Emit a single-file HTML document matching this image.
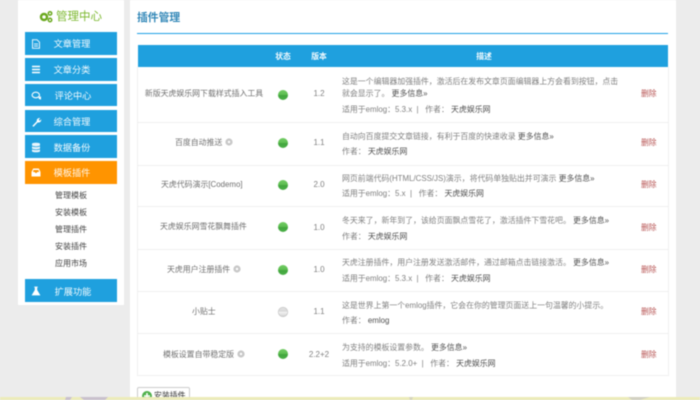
<!DOCTYPE html>
<html lang="zh"><head><meta charset="utf-8"><title>插件管理</title>
<style>
html,body{margin:0;padding:0;width:700px;height:400px;overflow:hidden;background:#ececec}
#w{position:relative;width:700px;height:400px;overflow:hidden;font-family:"Liberation Sans","Noto Sans CJK SC",sans-serif;filter:blur(.4px)}
#w div,#w svg{position:absolute}
.t{white-space:nowrap;line-height:12px;height:12px;font-size:7.6px;color:#777}
.c{text-align:center}
.b{left:25px;width:92px;height:23px;background:#1fa0de}
.bt{left:53px;width:38px;color:#f2fafe;font-size:9.2px;text-align:center;white-space:nowrap;line-height:12px}
.s{left:55px;color:#444;font-size:8px;line-height:12px;white-space:nowrap}
.line{left:138px;width:530px;height:1px;background:#efefef}
.dot{left:278px;width:10px;height:10px;border-radius:50%;background:linear-gradient(#72cc64 0,#5fbf52 45%,#42a63e 55%,#4cb048 100%)}
.n{left:137px;width:134px;text-align:center;font-size:7.9px;color:#707070;line-height:12px;white-space:nowrap}
.v{left:300px;width:38px;text-align:center;font-size:8px;color:#808080;line-height:12px}
.d{left:342px;margin-top:1px;font-size:7.9px;color:#808080;line-height:12px;white-space:nowrap}
.d span{color:#505050}
.x{left:641px;font-size:7.8px;color:#b5504f;line-height:12px;white-space:nowrap}
.g{width:8px;height:8px}
</style></head><body><div id="w">
<div style="left:18px;top:0;width:106px;height:305px;background:#fff"></div>
<div style="left:130px;top:0;width:546px;height:397px;background:#fff"></div>

<svg style="left:39px;top:10px" width="14" height="13" viewBox="0 0 14 13"><circle cx="5" cy="7" r="3" fill="none" stroke="#6aa81e" stroke-width="2.4"/><circle cx="11" cy="3.4" r="1.7" fill="none" stroke="#6aa81e" stroke-width="1.5"/><circle cx="11" cy="10" r="1.7" fill="none" stroke="#6aa81e" stroke-width="1.5"/></svg>
<div class="t" style="left:56px;top:10px;font-size:11.5px;line-height:14px;height:14px;color:#7cb82f">管理中心</div>

<div class="b" style="top:32px"></div><div class="bt" style="top:38px">文章管理</div>
<svg style="left:31px;top:39px" width="10" height="10" viewBox="0 0 10 10"><path d="M1.5.8H6L8.5 3.2V9.2H1.5ZM3 5H7M3 7H7" fill="none" stroke="#e6f4fc" stroke-width="1"/></svg>
<div class="b" style="top:58px"></div><div class="bt" style="top:64px">文章分类</div>
<svg style="left:31px;top:65px" width="10" height="9" viewBox="0 0 10 9"><path d="M1 1.5H9M1 4.5H9M1 7.5H9" stroke="#fff" stroke-width="1.5"/></svg>
<div class="b" style="top:84px;height:22px"></div><div class="bt" style="top:90px;left:54px">评论中心</div>
<svg style="left:31px;top:91px" width="11" height="10" viewBox="0 0 11 10"><ellipse cx="4.8" cy="4" rx="3.7" ry="2.8" fill="none" stroke="#fff" stroke-width="1.1"/><path d="M7.5 6.5L10 5.2V8.6L8 8Z" fill="#fff"/></svg>
<div class="b" style="top:110px;height:22px"></div><div class="bt" style="top:116px;left:53px">综合管理</div>
<svg style="left:31px;top:117px" width="11" height="10" viewBox="0 0 11 10"><path d="M1.3 9L5.8 4.3C5.4 2.2 7 .6 9.2 1L7.6 2.8 8.6 3.8 10.2 2.4C10.5 4.6 8.6 6 6.7 5.4L2.6 9.8Z" fill="#fff"/></svg>
<div class="b" style="top:135px"></div><div class="bt" style="top:142px">数据备份</div>
<svg style="left:31px;top:142px" width="10" height="11" viewBox="0 0 10 11"><path d="M1 1.8C1 .4 9 .4 9 1.8V9.2C9 10.6 1 10.6 1 9.2Z" fill="#e8f5fc"/><path d="M1 4C3 5 7 5 9 4M1 7C3 8 7 8 9 7" fill="none" stroke="#1fa0de" stroke-width=".8"/></svg>
<div class="b" style="top:161px;background:#ff9400"></div><div class="bt" style="top:167px;color:#fff6ea">模板插件</div>
<svg style="left:31px;top:168px" width="10" height="9" viewBox="0 0 10 9"><path d="M2.2.5H7.8L9.5 4V8.5H.5V4Z" fill="#fff"/><path d="M2.5 2H7.5L8 4H6.2L5.6 5H4.4L3.8 4H2Z" fill="#ff9400"/></svg>
<div class="s" style="top:190px">管理模板</div>
<div class="s" style="top:207px">安装模板</div>
<div class="s" style="top:224px">管理插件</div>
<div class="s" style="top:241px">安装插件</div>
<div class="s" style="top:258px">应用市场</div>
<div class="b" style="top:279px"></div><div class="bt" style="top:286px;left:54px">扩展功能</div>
<svg style="left:31px;top:286px" width="10" height="10" viewBox="0 0 10 10"><path d="M3.2.6H6.8V1.4H6.2V4L9.4 9.4H.6L3.8 4V1.4H3.2Z" fill="#fff"/></svg>

<div class="t" style="left:137px;top:11px;font-size:10.8px;line-height:14px;height:14px;color:#3388b8;font-weight:bold">插件管理</div>
<div style="left:137px;top:33px;width:531px;height:1px;background:#1ea0e6"></div>

<div style="left:137px;top:67px;width:530px;height:308px;border:1px solid #f0f0f0;border-top:0"></div>
<div style="left:138px;top:45px;width:530px;height:22px;background:#1fa0de"></div>
<div class="t c" style="left:268px;width:30px;top:51px;color:#f2fafe;font-weight:bold;font-size:7.8px">状态</div>
<div class="t c" style="left:304px;width:30px;top:51px;color:#f2fafe;font-weight:bold;font-size:7.8px">版本</div>
<div class="t c" style="left:469px;width:30px;top:51px;color:#f2fafe;font-weight:bold;font-size:7.8px">描述</div>

<div class="line" style="top:122px"></div>
<div class="line" style="top:165px"></div>
<div class="line" style="top:206px"></div>
<div class="line" style="top:249px"></div>
<div class="line" style="top:291px"></div>
<div class="line" style="top:333px"></div>

<div class="n" style="top:88px">新版天虎娱乐网下载样式插入工具</div>
<div class="dot" style="top:90px"></div><div class="v" style="top:88px">1.2</div>
<div class="d" style="top:75px">这是一个编辑器加强插件，激活后在发布文章页面编辑器上方会看到按钮，点击</div>
<div class="d" style="top:87px">就会显示了。 <span>更多信息»</span></div>
<div class="d" style="top:103px">适用于emlog：5.3.x &nbsp;|&nbsp;&nbsp; 作者： <span>天虎娱乐网</span></div>
<div class="x" style="top:88px">删除</div>

<div class="n" style="top:137px;left:175px;width:auto">百度自动推送</div>
<svg class="g" style="left:225px;top:138px" viewBox="0 0 8 8"><circle cx="4" cy="4" r="2.4" fill="none" stroke="#c8c8c8" stroke-width="2.4"/></svg>
<div class="dot" style="top:138px"></div><div class="v" style="top:137px">1.1</div>
<div class="d" style="top:130px">自动向百度提交文章链接，有利于百度的快速收录 <span>更多信息»</span></div>
<div class="d" style="top:145px">作者： <span>天虎娱乐网</span></div>
<div class="x" style="top:137px">删除</div>

<div class="n" style="top:179px;left:161px;width:auto">天虎代码演示[Codemo]</div>
<div class="dot" style="top:180px"></div><div class="v" style="top:179px">2.0</div>
<div class="d" style="top:172px">网页前端代码(HTML/CSS/JS)演示，将代码单独贴出并可演示 <span>更多信息»</span></div>
<div class="d" style="top:187px">适用于emlog：5.x &nbsp;|&nbsp;&nbsp; 作者： <span>天虎娱乐网</span></div>
<div class="x" style="top:179px">删除</div>

<div class="n" style="top:221px;left:160px;width:auto">天虎娱乐网雪花飘舞插件</div>
<div class="dot" style="top:222px"></div><div class="v" style="top:222px">1.0</div>
<div class="d" style="top:214px">冬天来了，新年到了，该给页面飘点雪花了，激活插件下雪花吧。 <span>更多信息»</span></div>
<div class="d" style="top:230px">作者： <span>天虎娱乐网</span></div>
<div class="x" style="top:222px">删除</div>

<div class="n" style="top:264px;left:167px;width:auto">天虎用户注册插件</div>
<svg class="g" style="left:233px;top:265px" viewBox="0 0 8 8"><circle cx="4" cy="4" r="2.4" fill="none" stroke="#c8c8c8" stroke-width="2.4"/></svg>
<div class="dot" style="top:265px"></div><div class="v" style="top:264px">1.0</div>
<div class="d" style="top:256px">天虎注册插件，用户注册发送激活邮件，通过邮箱点击链接激活。 <span>更多信息»</span></div>
<div class="d" style="top:272px">适用于emlog：5.3.x &nbsp;|&nbsp;&nbsp; 作者： <span>天虎娱乐网</span></div>
<div class="x" style="top:264px">删除</div>

<div class="n" style="top:306px;left:192px;width:auto">小贴士</div>
<div class="dot" style="top:307px;background:linear-gradient(#e4e4e4 0,#d8d8d8 45%,#f4f4f4 50%,#cfcfcf 100%);box-shadow:inset 0 0 0 .5px #bbb"></div><div class="v" style="top:306px">1.1</div>
<div class="d" style="top:299px">这是世界上第一个emlog插件，它会在你的管理页面送上一句温馨的小提示。</div>
<div class="d" style="top:314px">作者： <span>emlog</span></div>
<div class="x" style="top:306px">删除</div>

<div class="n" style="top:349px;left:163px;width:auto">模板设置自带稳定版</div>
<svg class="g" style="left:237px;top:350px" viewBox="0 0 8 8"><circle cx="4" cy="4" r="2.4" fill="none" stroke="#c8c8c8" stroke-width="2.4"/></svg>
<div class="dot" style="top:349px"></div><div class="v" style="top:349px">2.2+2</div>
<div class="d" style="top:341px">为支持的模板设置参数。 <span>更多信息»</span></div>
<div class="d" style="top:357px">适用于emlog：5.2.0+ &nbsp;|&nbsp;&nbsp; 作者： <span>天虎娱乐网</span></div>
<div class="x" style="top:349px">删除</div>

<div style="left:137px;top:387px;width:51px;height:16px;border:1px solid #ccc;border-radius:2px;background:#fff"></div>
<svg style="left:142px;top:391px" width="10" height="10" viewBox="0 0 10 10"><circle cx="5" cy="5" r="5" fill="#4fb04a"/><path d="M5 2V8M2 5H8" stroke="#fff" stroke-width="1.6"/></svg>
<div class="t" style="left:154px;top:390px;font-size:7.9px;color:#333">安装插件</div>

<div style="left:0;top:397px;width:700px;height:3px;background:#ecebb9"></div>
<svg style="left:0;top:397px" width="700" height="3"><path d="M66 0H72L70 3H65ZM80 0H108L105 3H84Z" fill="#c9c0cc"/><path d="M409 0H413L412 3H410Z" fill="#d6d4bd"/><path d="M628 0H650L640 3H632Z" fill="#d2d1c2"/></svg>
</div></body></html>
